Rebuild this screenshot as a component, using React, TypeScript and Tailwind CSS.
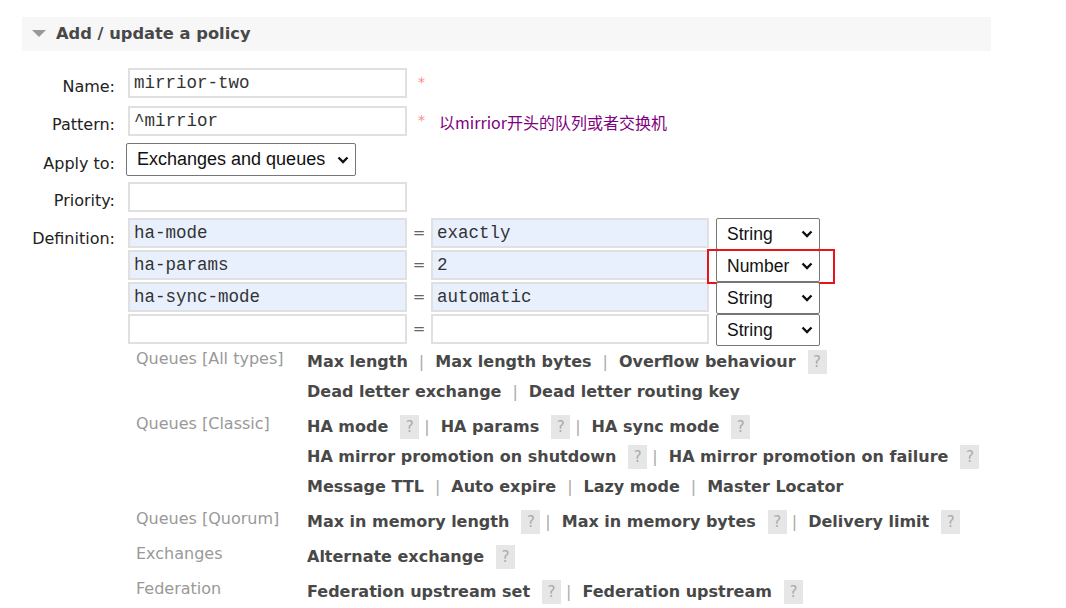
import React from "react";

type Item = { text: string; help?: boolean };

const groups: { label: string; lines: Item[][] }[] = [
  {
    label: "Queues [All types]",
    lines: [
      [{ text: "Max length" }, { text: "Max length bytes" }, { text: "Overflow behaviour", help: true }],
      [{ text: "Dead letter exchange" }, { text: "Dead letter routing key" }],
    ],
  },
  {
    label: "Queues [Classic]",
    lines: [
      [
        { text: "HA mode", help: true },
        { text: "HA params", help: true },
        { text: "HA sync mode", help: true },
      ],
      [
        { text: "HA mirror promotion on shutdown", help: true },
        { text: "HA mirror promotion on failure", help: true },
      ],
      [{ text: "Message TTL" }, { text: "Auto expire" }, { text: "Lazy mode" }, { text: "Master Locator" }],
    ],
  },
  {
    label: "Queues [Quorum]",
    lines: [
      [
        { text: "Max in memory length", help: true },
        { text: "Max in memory bytes", help: true },
        { text: "Delivery limit", help: true },
      ],
    ],
  },
  { label: "Exchanges", lines: [[{ text: "Alternate exchange", help: true }]] },
  {
    label: "Federation",
    lines: [[{ text: "Federation upstream set", help: true }, { text: "Federation upstream", help: true }]],
  },
];

const definition = [
  { key: "ha-mode", value: "exactly", type: "String" },
  { key: "ha-params", value: "2", type: "Number" },
  { key: "ha-sync-mode", value: "automatic", type: "String" },
  { key: "", value: "", type: "String" },
];

function Chevron() {
  return (
    <svg width="12" height="8" viewBox="0 0 12 8" className="shrink-0">
      <path d="M1.5 1.5 L6 6 L10.5 1.5" fill="none" stroke="#111" strokeWidth="2.4" />
    </svg>
  );
}

function TextBox({ value, filled, w = "w-[279px]" }: { value: string; filled?: boolean; w?: string }) {
  return (
    <div
      className={`${w} h-[30px] border-2 border-[#e0e0e0] ${filled ? "bg-[#e8f0fe]" : "bg-white"} flex items-center px-[4px] text-[17.5px] text-[#333] font-['Liberation_Mono',monospace]`}
    >
      {value}
    </div>
  );
}

function FakeSelect({ value, w }: { value: string; w: string }) {
  return (
    <div
      className={`${w} border border-[#767676] rounded-[2px] bg-white flex items-center justify-between pl-[10px] pr-[6px] text-[17.5px] text-[#111] font-['Liberation_Sans',Arial,sans-serif]`}
    >
      <span>{value}</span>
      <Chevron />
    </div>
  );
}

function Help() {
  return (
    <span className="ml-[12px] inline-flex w-[19px] h-[24px] items-center justify-center bg-[#e6e6e6] text-[#aaa] font-normal text-[15px]">
      ?
    </span>
  );
}

function Label({ children, pt = "pt-[9px]" }: { children: React.ReactNode; pt?: string }) {
  return <div className={`w-[115px] shrink-0 text-right ${pt} leading-[20px] text-[16px] text-[#222]`}>{children}</div>;
}

export default function App() {
  return (
    <div className="w-[1066px] h-[608px] bg-white overflow-hidden pt-[17px] pl-[22px] font-['DejaVu_Sans',Verdana,sans-serif]">
      <div className="w-[969px] h-[34px] bg-[#f7f7f7] flex items-center pl-[10px]">
        <svg width="14" height="8" viewBox="0 0 14 8">
          <path d="M0 0 L14 0 L7 7 Z" fill="#999" />
        </svg>
        <span className="ml-[10px] text-[16.3px] font-bold text-[#484848]">Add / update a policy</span>
      </div>

      <div className="flex flex-col -ml-[22px] mt-[17px]">
        <div className="flex items-start gap-[13px]">
          <Label>Name:</Label>
          <TextBox value="mirrior-two" />
          <span className="ml-[-2px] pt-[4px] text-[#f88] text-[14px]">*</span>
        </div>

        <div className="flex items-start gap-[13px] mt-[8px]">
          <Label>Pattern:</Label>
          <TextBox value="^mirrior" />
          <span className="ml-[-2px] pt-[4px] text-[#f88] text-[14px]">*</span>
          <span className="ml-[1px] pt-[4px] text-[16px] text-[#800080] font-['Noto_Sans_CJK_SC',sans-serif]">
            以mirrior开头的队列或者交换机
          </span>
        </div>

        <div className="flex items-start gap-[11px] mt-[7px]">
          <Label pt="pt-[11px]">Apply to:</Label>
          <div className="flex-none">
            <FakeSelect value="Exchanges and queues" w="w-[230px] h-[33px] text-[18px]" />
          </div>
        </div>

        <div className="flex items-start gap-[13px] mt-[6px]">
          <Label>Priority:</Label>
          <TextBox value="" />
        </div>

        <div className="flex items-start gap-[13px] mt-[6px]">
          <Label pt="pt-[11px]">Definition:</Label>
          <div className="flex flex-col">
            {definition.map((row, i) => (
              <div key={i} className="flex items-start h-[32px]">
                <TextBox value={row.key} filled={!!row.key} />
                <span className="w-[24px] text-center pt-[4px] text-[15px] text-[#666]">=</span>
                <TextBox value={row.value} filled={!!row.value} w="w-[278px]" />
                <div className="relative ml-[7px]">
                  <FakeSelect value={row.type} w="w-[104px] h-[32px]" />
                  {row.type === "Number" && (
                    <div className="absolute -left-[9px] -top-[1px] w-[128px] h-[35px] border-2 border-[#e8141a]" />
                  )}
                </div>
              </div>
            ))}
          </div>
        </div>

        <div className="flex flex-col mt-[1px] ml-[136px]">
          {groups.map((g, gi) => (
            <div key={gi} className={`flex ${gi > 0 ? "mt-[5px]" : ""}`}>
              <div className="w-[171px] shrink-0 text-[16px] text-[#999] leading-[30px] -mt-[3px] whitespace-nowrap">{g.label}</div>
              <div className="flex flex-col">
                {g.lines.map((line, li) => (
                  <div key={li} className="flex items-center h-[30px] text-[16px] font-bold text-[#484848] whitespace-nowrap">
                    {line.map((it, ii) => (
                      <React.Fragment key={ii}>
                        {ii > 0 && (
                          <span className={`${line[ii - 1].help ? "ml-[5px]" : "ml-[11px]"} mr-[11px] font-normal text-[#aaa]`}>|</span>
                        )}
                        <span>{it.text}</span>
                        {it.help && <Help />}
                      </React.Fragment>
                    ))}
                  </div>
                ))}
              </div>
            </div>
          ))}
        </div>
      </div>
    </div>
  );
}
